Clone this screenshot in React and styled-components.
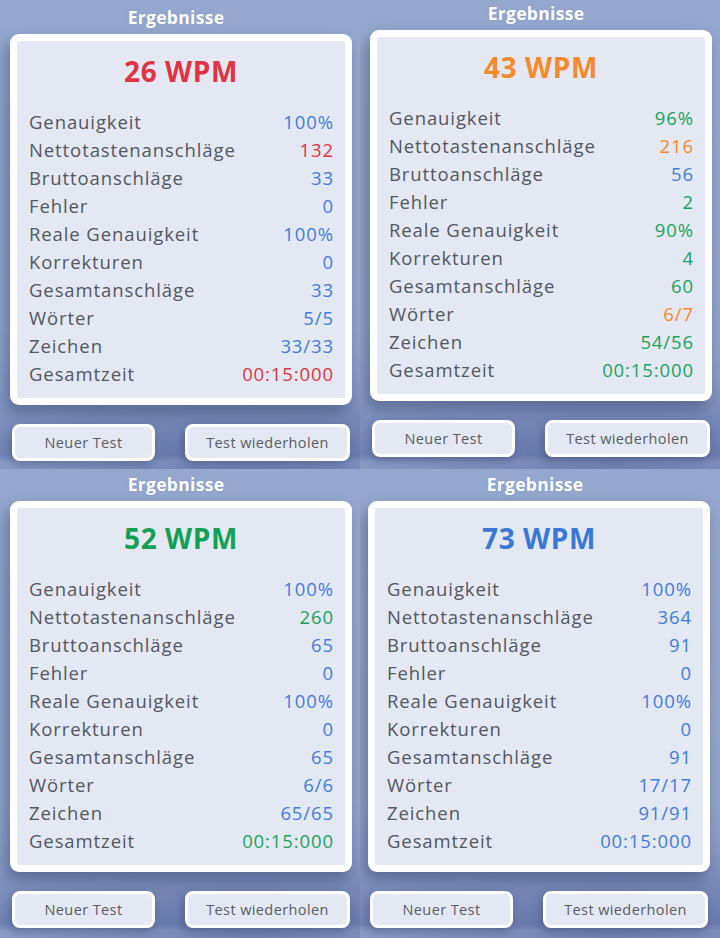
import styled, { createGlobalStyle } from "styled-components";

const GlobalStyle = createGlobalStyle`
  html, body {
    margin: 0;
    padding: 0;
    background: #94a6cd;
  }
  body {
    font-family: "Open Sans", "Liberation Sans", sans-serif;
  }
`;

const C = {
  red: "#e03344",
  orange: "#f58a2c",
  green: "#1aa35e",
  blue: "#3f7ddc",
};

const results = [
  {
    wpm: 26,
    wpmColor: C.red,
    shift: [0, 0],
    rows: [
      ["Genauigkeit", "100%", C.blue],
      ["Nettotastenanschläge", "132", C.red],
      ["Bruttoanschläge", "33", C.blue],
      ["Fehler", "0", C.blue],
      ["Reale Genauigkeit", "100%", C.blue],
      ["Korrekturen", "0", C.blue],
      ["Gesamtanschläge", "33", C.blue],
      ["Wörter", "5/5", C.blue],
      ["Zeichen", "33/33", C.blue],
      ["Gesamtzeit", "00:15:000", C.red],
    ],
  },
  {
    wpm: 43,
    wpmColor: C.orange,
    shift: [-4, 0],
    rows: [
      ["Genauigkeit", "96%", C.green],
      ["Nettotastenanschläge", "216", C.orange],
      ["Bruttoanschläge", "56", C.blue],
      ["Fehler", "2", C.green],
      ["Reale Genauigkeit", "90%", C.green],
      ["Korrekturen", "4", C.green],
      ["Gesamtanschläge", "60", C.green],
      ["Wörter", "6/7", C.orange],
      ["Zeichen", "54/56", C.green],
      ["Gesamtzeit", "00:15:000", C.green],
    ],
  },
  {
    wpm: 52,
    wpmColor: "#12a055",
    shift: [-2, 0],
    rows: [
      ["Genauigkeit", "100%", C.blue],
      ["Nettotastenanschläge", "260", C.green],
      ["Bruttoanschläge", "65", C.blue],
      ["Fehler", "0", C.blue],
      ["Reale Genauigkeit", "100%", C.blue],
      ["Korrekturen", "0", C.blue],
      ["Gesamtanschläge", "65", C.blue],
      ["Wörter", "6/6", C.blue],
      ["Zeichen", "65/65", C.blue],
      ["Gesamtzeit", "00:15:000", C.green],
    ],
  },
  {
    wpm: 73,
    wpmColor: "#3a78d6",
    shift: [-2, -2],
    rows: [
      ["Genauigkeit", "100%", C.blue],
      ["Nettotastenanschläge", "364", C.blue],
      ["Bruttoanschläge", "91", C.blue],
      ["Fehler", "0", C.blue],
      ["Reale Genauigkeit", "100%", C.blue],
      ["Korrekturen", "0", C.blue],
      ["Gesamtanschläge", "91", C.blue],
      ["Wörter", "17/17", C.blue],
      ["Zeichen", "91/91", C.blue],
      ["Gesamtzeit", "00:15:000", C.blue],
    ],
  },
];

export default function App() {
  return (
    <>
      <GlobalStyle />
      <Grid>
        {results.map((r, i) => (
          <Quadrant key={i} $dy={r.shift[0]} $dx={r.shift[1]}>
            <Title>Ergebnisse</Title>
            <Card>
              <Inner>
                <Wpm $color={r.wpmColor}>{r.wpm} WPM</Wpm>
                <Stats>
                  {r.rows.map(([label, value, color]) => (
                    <Row key={label}>
                      <Label>{label}</Label>
                      <Value $color={color}>{value}</Value>
                    </Row>
                  ))}
                </Stats>
              </Inner>
            </Card>
            <Buttons>
              <Button $w={143}>Neuer Test</Button>
              <Button $w={165}>Test wiederholen</Button>
            </Buttons>
          </Quadrant>
        ))}
      </Grid>
    </>
  );
}

const Grid = styled.div`
  display: grid;
  grid-template-columns: 360px 360px;
  grid-template-rows: 469px 469px;
  width: 720px;
  height: 938px;
  overflow: hidden;
`;

const Quadrant = styled.div`
  display: flex;
  flex-direction: column;
  align-items: flex-start;
  padding: ${(p) => 6 + p.$dy}px 0 0 ${(p) => 10 + p.$dx}px;
  overflow: hidden;
  background:
    radial-gradient(ellipse 120% 30% at 70% 100%, rgba(90, 105, 160, 0.55), rgba(90, 105, 160, 0) 70%),
    linear-gradient(180deg, #95a7ce 0%, #93a5cc 70%, #8798c4 85%, #7183b4 97%, #8e9fc8 98.5%);
`;

const Title = styled.div`
  align-self: stretch;
  margin-right: 18px;
  height: 22px;
  line-height: 22px;
  text-align: center;
  color: #fff;
  font-weight: 700;
  font-size: 17.5px;
  letter-spacing: 0.3px;
  text-shadow: 0 0 2px rgba(120, 140, 200, 0.6);
`;

const Card = styled.div`
  margin-top: 6px;
  width: 342px;
  height: 371px;
  box-sizing: border-box;
  padding: 7px;
  background: #fff;
  border-radius: 9px;
  box-shadow: -4px 8px 16px rgba(45, 55, 95, 0.45);
`;

const Inner = styled.div`
  height: 100%;
  background: #e4e8f3;
  border-radius: 2px;
  box-sizing: border-box;
  padding: 12px 12px 0 12px;
`;

const Wpm = styled.div`
  text-align: center;
  font-weight: 700;
  font-size: 28px;
  letter-spacing: 0.6px;
  line-height: 36px;
  color: ${(p) => p.$color};
`;

const Stats = styled.div`
  margin-top: 18px;
  display: flex;
  flex-direction: column;
`;

const Row = styled.div`
  display: flex;
  justify-content: space-between;
  align-items: center;
  height: 28px;
  font-size: 18.5px;
  letter-spacing: 0.9px;
`;

const Label = styled.span`
  color: #53575e;
`;

const Value = styled.span`
  margin-right: -1px;
  color: ${(p) => p.$color};
`;

const Buttons = styled.div`
  margin-top: 19px;
  width: 338px;
  padding-left: 2px;
  display: flex;
  justify-content: space-between;
`;

const Button = styled.button`
  width: ${(p) => p.$w}px;
  height: 37px;
  box-sizing: border-box;
  border: 3px solid #fff;
  border-radius: 8px;
  background: #e4e8f3;
  color: #595d63;
  font-family: "Open Sans", "Liberation Sans", sans-serif;
  font-size: 14.5px;
  letter-spacing: 0.4px;
  padding: 0;
  box-shadow: -2px 4px 8px rgba(45, 55, 95, 0.35);
`;
